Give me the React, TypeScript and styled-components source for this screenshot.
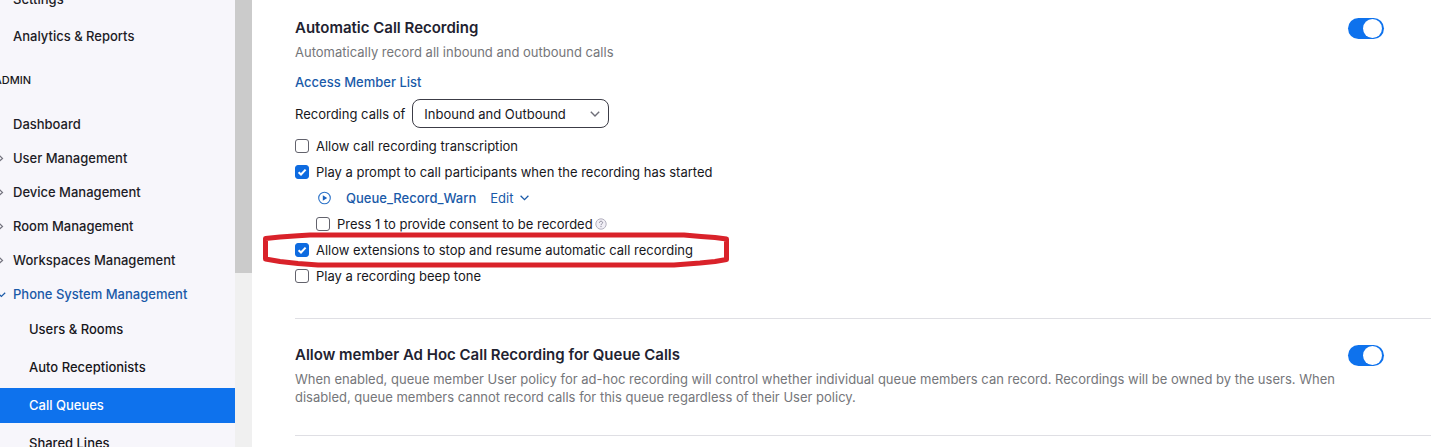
import React from 'react';
import styled, { createGlobalStyle } from 'styled-components';

const GlobalStyle = createGlobalStyle`
  *, *::before, *::after { box-sizing: border-box; }
  body {
    margin: 0;
    background: #ffffff;
    color: #17171c;
    font-family: Inter, "Liberation Sans", sans-serif;
    font-size: 13px;
    line-height: 18px;
  }
  input, select, button { font: inherit; color: inherit; margin: 0; }
  a { text-decoration: none; }
`;

const Page = styled.div`
  display: flex;
  height: 100vh;
  overflow: hidden;
`;

const Sidebar = styled.nav`
  flex: 0 0 235px;
  overflow: hidden;
  background: #f7f6fb;
`;

const NavScroll = styled.div`
  margin: -20px 0 0 -16px;
`;

const NavItem = styled.a<{ $tall?: boolean; $open?: boolean }>`
  display: grid;
  grid-template-columns: 13px 1fr;
  align-items: center;
  height: ${(p) => (p.$tall ? 37 : 34)}px;
  padding-left: 16px;
  color: ${(p) => (p.$open ? '#1a5aa8' : '#1d1c26')};
  font-weight: 500;
`;

const NavArrow = styled.svg<{ $open?: boolean }>`
  width: 12px;
  height: 12px;
  margin-left: -6px;
  fill: none;
  stroke: ${(p) => (p.$open ? '#1a5aa8' : '#74737e')};
  stroke-width: 1.2;
`;

const NavLabel = styled.span`
  grid-column: 2;
`;

const NavHeading = styled.h2`
  margin: 0;
  padding-left: 10px;
  font-size: 11px;
  font-weight: 500;
  line-height: 53px;
`;

const SubItem = styled.a<{ $active?: boolean }>`
  display: block;
  margin: 1px 0 3px;
  padding-left: 45px;
  line-height: 35px;
  font-weight: 500;
  color: ${(p) => (p.$active ? '#ffffff' : '#17171c')};
  background: ${(p) => (p.$active ? '#0e72ed' : 'transparent')};
`;

const ScrollTrack = styled.div`
  flex: 0 0 17px;
  background: #f0f0f0;
`;

const ScrollThumb = styled.div`
  height: 61%;
  background: #cbcbcb;
`;

const Main = styled.main`
  flex: 1;
  min-width: 0;
  margin-top: -8px;
  padding-left: 43px;
`;

const Section = styled.section`
  display: flex;
  gap: 12px;
  padding: 24px 47px 29px 0;
  border-bottom: 1px solid #dfdfe4;
`;

const SectionBody = styled.div`
  flex: 1;
  min-width: 0;
`;

const Title = styled.h3`
  margin: 0;
  font-size: 15px;
  font-weight: 600;
  line-height: 24px;
  color: #222230;
`;

const Description = styled.p`
  margin: 3px 0 0;
  color: #75767a;
`;

const Link = styled.a`
  color: #1a5aa8;
  font-weight: 500;
`;

const LinkLine = styled.div`
  margin: 12px 0 8px;
`;

const Field = styled.div`
  display: flex;
  align-items: center;
  gap: 7px;
  margin-bottom: 5px;
`;

const SelectBox = styled.div`
  display: grid;
  align-items: center;
  width: 197px;
`;

const Select = styled.select`
  grid-area: 1 / 1;
  appearance: none;
  height: 29px;
  padding: 0 28px 0 11px;
  border: 1px solid #3c3c46;
  border-radius: 8px;
  background: #ffffff;
`;

const SelectArrow = styled.svg`
  grid-area: 1 / 1;
  justify-self: end;
  width: 10px;
  height: 6px;
  margin-right: 9px;
  fill: none;
  stroke: #6e6e78;
  stroke-width: 1.4;
  pointer-events: none;
`;

const Row = styled.div<{ $indent?: boolean }>`
  position: relative;
  display: flex;
  align-items: center;
  height: 26px;
  padding-left: ${(p) => (p.$indent ? 21 : 0)}px;
`;

const CheckLabel = styled.label`
  display: flex;
  align-items: center;
  gap: 7px;
`;

const CheckFrame = styled.span`
  display: grid;
  width: 14px;
  height: 14px;
`;

const CheckInput = styled.input`
  grid-area: 1 / 1;
  appearance: none;
  width: 14px;
  height: 14px;
  border: 1px solid #62626c;
  border-radius: 3px;
  background: #ffffff;
  &:checked { border-color: #0e6be0; background: #0e6be0; }
  &:not(:checked) + svg { display: none; }
`;

const CheckMark = styled.svg`
  grid-area: 1 / 1;
  width: 14px;
  height: 14px;
  fill: none;
  stroke: #ffffff;
  stroke-width: 2;
  pointer-events: none;
`;

const PlainButton = styled.button`
  display: flex;
  align-items: center;
  gap: 7px;
  padding: 0;
  border: 0;
  background: none;
  color: #1a5aa8;
`;

const PromptRow = styled(Row)`
  gap: 14px;
  padding-left: 22px;
`;

const HelpIcon = styled.svg`
  width: 12px;
  height: 12px;
  margin-left: 2px;
`;

const Marker = styled.svg`
  position: absolute;
  left: -35px;
  top: -7px;
  width: 472px;
  height: 40px;
  fill: none;
  stroke: #d9222a;
  stroke-width: 5;
  stroke-linejoin: round;
  pointer-events: none;
`;

const Toggle = styled.input`
  appearance: none;
  flex: 0 0 36px;
  height: 21px;
  margin-top: 2px;
  padding: 1px 2px;
  border-radius: 11px;
  background: #9a9aa5;
  &::before {
    content: '';
    display: block;
    width: 19px;
    height: 19px;
    border-radius: 50%;
    background: #ffffff;
  }
  &:checked { background: #0e72ed; }
  &:checked::before { margin-left: auto; }
`;

const groups = ['User Management', 'Device Management', 'Room Management', 'Workspaces Management'];
const phonePages = ['Users & Rooms', 'Auto Receptionists', 'Call Queues', 'Shared Lines'];

function Check({ label, checked }: { label: string; checked?: boolean }) {
  return (
    <CheckLabel>
      <CheckFrame>
        <CheckInput type="checkbox" defaultChecked={checked} />
        <CheckMark viewBox="0 0 14 14" aria-hidden="true">
          <path d="M3.6 7.2 6 9.5 10.6 4.6" />
        </CheckMark>
      </CheckFrame>
      {label}
    </CheckLabel>
  );
}

export default function App() {
  return (
    <Page>
      <GlobalStyle />
      <Sidebar>
        <NavScroll>
          <NavItem href="#" $tall><NavLabel>Settings</NavLabel></NavItem>
          <NavItem href="#" $tall><NavLabel>Analytics &amp; Reports</NavLabel></NavItem>
          <NavHeading>ADMIN</NavHeading>
          <NavItem href="#"><NavLabel>Dashboard</NavLabel></NavItem>
          {groups.map((name) => (
            <NavItem href="#" key={name}>
              <NavArrow viewBox="0 0 12 12"><path d="M4.500 2.8 8.500 6.4 4.500 10" /></NavArrow>
              <NavLabel>{name}</NavLabel>
            </NavItem>
          ))}
          <NavItem href="#" $open>
            <NavArrow $open viewBox="0 0 12 12"><path d="M3.6 4.8 7.4 8.4 11.2 4.8" /></NavArrow>
            <NavLabel>Phone System Management</NavLabel>
          </NavItem>
          {phonePages.map((name) => (
            <SubItem href="#" key={name} $active={name === 'Call Queues'}>{name}</SubItem>
          ))}
        </NavScroll>
      </Sidebar>
      <ScrollTrack><ScrollThumb /></ScrollTrack>
      <Main>
        <Section>
          <SectionBody>
            <Title id="auto-title">Automatic Call Recording</Title>
            <Description>Automatically record all inbound and outbound calls</Description>
            <LinkLine><Link href="#">Access Member List</Link></LinkLine>
            <Field>
              <label htmlFor="direction">Recording calls of</label>
              <SelectBox>
                <Select id="direction" defaultValue="both">
                  <option value="both">Inbound and Outbound</option>
                </Select>
                <SelectArrow viewBox="0 0 10 6"><path d="M0.8 0.8 5 5 9.2 0.8" /></SelectArrow>
              </SelectBox>
            </Field>
            <Row><Check label="Allow call recording transcription" /></Row>
            <Row><Check label="Play a prompt to call participants when the recording has started" checked /></Row>
            <PromptRow>
              <PlainButton type="button" aria-label="Play">
                <svg width="15" height="14" viewBox="0 0 15 14">
                  <circle cx="7.5" cy="7" r="5.8" fill="none" stroke="#2b72c8" strokeWidth="1.1" />
                  <path d="M5.8 4.3v5.4L10.2 7z" fill="#1a62c0" />
                </svg>
              </PlainButton>
              <Link href="#">Queue_Record_Warn</Link>
              <PlainButton type="button">
                Edit
                <svg width="9" height="6" viewBox="0 0 9 6" fill="none" stroke="#1a5aa8" strokeWidth="1.3">
                  <path d="M0.6 0.8 4.5 4.6 8.4 0.8" />
                </svg>
              </PlainButton>
            </PromptRow>
            <Row $indent>
              <Check label="Press 1 to provide consent to be recorded" />
              <HelpIcon viewBox="0 0 12 12">
                <circle cx="6" cy="6" r="5.2" fill="#f1eff6" stroke="#b3b1bf" strokeWidth="1" />
                <path d="M4.4 4.8C4.4 2.7 7.6 2.7 7.6 4.7 7.6 5.8 6 5.8 6 7.2M6 8v1.1" fill="none" stroke="#8d8b9c" strokeWidth="1" />
              </HelpIcon>
            </Row>
            <Row>
              <Check label="Allow extensions to stop and resume automatic call recording" checked />
              <Marker viewBox="0 0 472 40" aria-hidden="true">
                <path d="M50 5H424L441 6.5 455 7.5 466.500 9V29.500L455 31.500 440 33 414 35H58L38 33.500 20 31.500 5.500 29V8.500L20 7 38 5.800Z" />
              </Marker>
            </Row>
            <Row><Check label="Play a recording beep tone" /></Row>
          </SectionBody>
          <Toggle type="checkbox" role="switch" defaultChecked aria-labelledby="auto-title" />
        </Section>
        <Section>
          <SectionBody>
            <Title id="adhoc-title">Allow member Ad Hoc Call Recording for Queue Calls</Title>
            <Description>
              When enabled, queue member User policy for ad-hoc recording will control whether individual queue members can record. Recordings will be owned by the users. When disabled, queue members cannot record calls for this queue regardless of their User policy.
            </Description>
          </SectionBody>
          <Toggle type="checkbox" role="switch" defaultChecked aria-labelledby="adhoc-title" />
        </Section>
      </Main>
    </Page>
  );
}
